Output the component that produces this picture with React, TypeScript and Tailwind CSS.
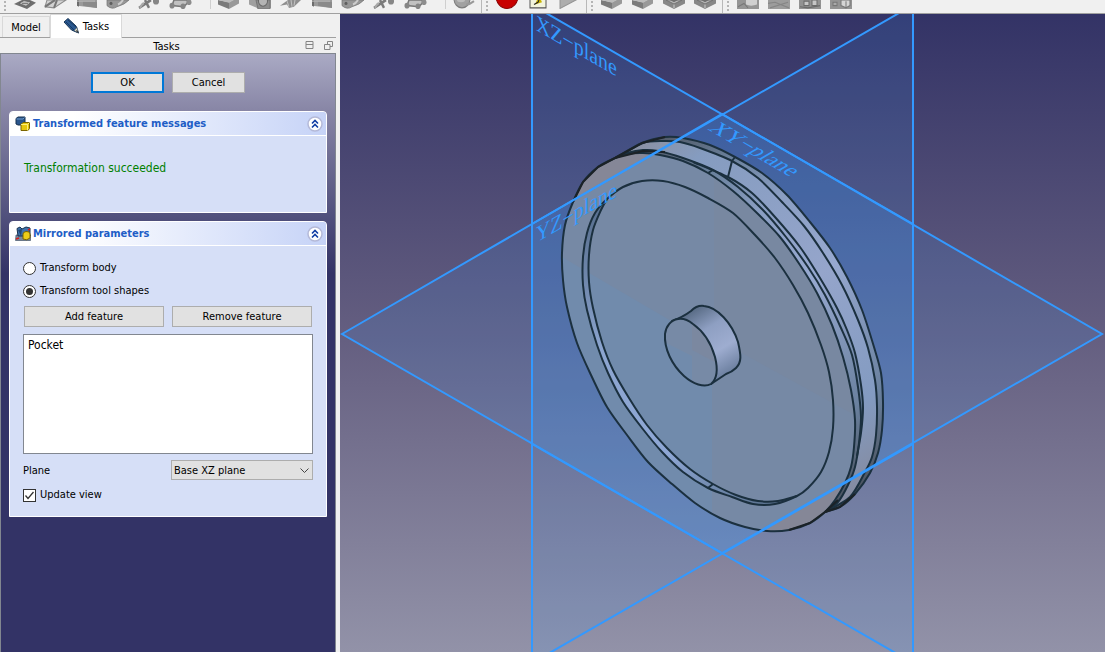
import type { ReactNode } from "react";

type IconName =
  | "sketch"
  | "pad"
  | "block"
  | "sweep"
  | "scissors"
  | "loft"
  | "hole"
  | "bolt"
  | "ball"
  | "record"
  | "macro"
  | "play"
  | "cube"
  | "cubeRing"
  | "tile"
  | "tileLine"
  | "tileDots"
  | "tileCube";

const toolGroups: { id: string; sections: IconName[][] }[] = [
  {
    id: "modeling",
    sections: [
      ["sketch", "pad", "block", "sweep", "scissors", "loft"],
      ["cube", "hole", "bolt", "block", "sweep", "scissors", "loft"],
      ["ball"],
    ],
  },
  { id: "macro", sections: [["record", "macro", "play"]] },
  { id: "dressup", sections: [["cube", "cube", "cubeRing", "cubeRing"]] },
  { id: "transform", sections: [["tile", "tileLine", "tileDots", "tileCube"]] },
];

// Only the lower part of the toolbar is on screen, so the icons are 9px slices
const icons: Record<IconName, ReactNode> = {
  sketch: (
    <>
      <path d="M1 3.500 9 0h8l6 2.500-9 5.500z" fill="#6f6f6f" />
      <path d="M6 3 11 .5l7 1.500-5 3.500z" fill="#c4c4c4" stroke="#555" strokeWidth=".6" />
      <path d="M9 3h6" stroke="#777" />
    </>
  ),
  pad: (
    <>
      <path d="M3 0 1 6l9 1L22 0z" fill="#d2d2d2" stroke="#8c8c8c" />
      <path d="M1 6 11 0M10 7l3-7" stroke="#777" strokeWidth="2" />
    </>
  ),
  block: (
    <>
      <path d="M2 0h20v7L2 5z" fill="#9a9a9a" />
      <path d="M2 0v5l2 1V0z" fill="#6c6c6c" />
      <path d="M8 1h10l4 1v5L8 5z" fill="#8a8a8a" />
      <path d="M2 1h18" stroke="#b8b8b8" />
    </>
  ),
  sweep: (
    <>
      <path d="M1 0v5q5 4 10 1Q19 4 23 0z" fill="#979797" stroke="#777" strokeWidth=".7" />
      <path d="M12 4q3-1 5-4" fill="none" stroke="#ccc" strokeWidth="2" />
      <circle cx="5" cy="3" r="1.500" fill="#5f5f5f" />
    </>
  ),
  scissors: (
    <>
      <path d="M2 7 14 0M8 0l4 7" stroke="#7b7b7b" strokeWidth="2.500" />
      <path d="M3 7q2-4 4-4" fill="none" stroke="#aaa" strokeWidth="2" />
      <circle cx="19" cy="1" r="3" fill="#868686" />
    </>
  ),
  loft: (
    <>
      <path d="M6 0 4 5l12 1 4-4-1-2z" fill="#c1c1c1" stroke="#777" strokeWidth="1.500" />
      <circle cx="4" cy="5" r="2.500" fill="#858585" />
      <circle cx="15" cy="5.500" r="2.500" fill="#858585" />
      <circle cx="21" cy="2" r="2.500" fill="#8d8d8d" />
    </>
  ),
  hole: (
    <>
      <path d="M1 0v4l8 3h14V0z" fill="#a0a0a0" />
      <path d="M8 0h14v8H10z" fill="#8d8d8d" stroke="#767676" />
      <circle cx="15" cy="1" r="4.500" fill="#b4b4b4" stroke="#666" />
    </>
  ),
  bolt: (
    <>
      <path d="M1 5 9 0h13l-7 6-5 1-2-3z" fill="#8f8f8f" />
      <path d="m8 1 2 5M12 0l1 6M16 0l-1 5" stroke="#c2c2c2" />
    </>
  ),
  ball: (
    <>
      <circle cx="10" cy="-1" r="8" fill="#a1a1a1" stroke="#7c7c7c" />
      <path d="M14 4q4 0 8-3" stroke="#999" strokeWidth="2" fill="none" />
      <ellipse cx="9" cy="0" rx="4" ry="2" fill="#bcbcbc" />
    </>
  ),
  record: <circle cx="12" cy="-3.500" r="11" fill="#c80000" stroke="#8c0000" />,
  macro: (
    <>
      <path d="M4-2h16v9H4z" fill="#f2f4dc" stroke="#555" />
      <path d="m9 4 2-4h4l1 2-4 1z" fill="#c8b400" />
      <path d="m8 4 4-2 1-2" stroke="#222" fill="none" />
    </>
  ),
  play: <path d="M3 7.500V-8L20-.5z" fill="#adadad" stroke="#949494" />,
  cube: (
    <>
      <path d="M1 0v4l11 4V2z" fill="#7b7b7b" />
      <path d="M12 2v6l10-5V0h-6z" fill="#999" />
      <path d="M1 0h16l-5 2.500z" fill="#bcbcbc" />
    </>
  ),
  cubeRing: (
    <>
      <path d="M1 0v3l11 5 11-5V0z" fill="#878787" />
      <path d="m4 0 8 3.500L20 0z" fill="#b9b9b9" stroke="#6d6d6d" strokeWidth=".8" />
      <path d="M8 0h8l-4 2z" fill="#707070" />
      <path d="M12 4v3" stroke="#ccc" />
    </>
  ),
  tile: (
    <>
      <path d="M1 0h22v8H1z" fill="#959595" />
      <path d="M10-1h11v5q-6 2-11 0z" fill="#d0d0d0" />
      <path d="m2 6 6-3 4 4" stroke="#777" fill="none" />
    </>
  ),
  tileLine: (
    <>
      <path d="M1 0h22v8H1z" fill="#9c9c9c" />
      <path d="m1 3 7-1 14 5M3 7l18-5" stroke="#858585" fill="none" />
    </>
  ),
  tileDots: (
    <>
      <path d="M1 0h22v8H1z" fill="#929292" />
      <path d="M6 1h5v4H6zM14 0h5v5h-5z" fill="#c6c6c6" stroke="#6b6b6b" />
      <path d="m2 6 8 1 12-2" stroke="#6b6b6b" fill="none" />
    </>
  ),
  tileCube: (
    <>
      <path d="M1 0h22v8H1z" fill="#949494" />
      <path d="M12 0h9v5l-4 2-5-2z" fill="#d5d5d5" stroke="#777" />
      <path d="M17 1v6M4 2h4v3H4z" stroke="#777" fill="#aaa" />
    </>
  ),
};

function Toolbar() {
  return (
    <header className="flex h-[14px] shrink-0 overflow-hidden border-b border-[#a0a0a0] bg-[#f0f0f0]">
      {toolGroups.map((group) => (
        <div
          key={group.id}
          className="flex shrink-0 items-start border-r border-[#b8b8b8] pl-1 pr-[5px] last:border-r-0"
        >
          <span className="mr-[7px] mt-px h-[10px] w-[2px] border-l-2 border-dotted border-[#b4b4b4]" />
          {group.sections.map((section, i) => (
            <div
              key={i}
              className="ml-[6px] flex gap-[7px] border-l border-[#cfcfcf] pl-[6px] pr-[12px] first-of-type:ml-0 first-of-type:border-l-0 first-of-type:pl-0 last:pr-0"
            >
              {section.map((name, j) => (
                <button key={j} type="button" aria-label={name} className="h-[9px] w-6">
                  <svg viewBox="0 0 24 8" preserveAspectRatio="none" className="block h-[9px] w-6">
                    {icons[name]}
                  </svg>
                </button>
              ))}
            </div>
          ))}
        </div>
      ))}
    </header>
  );
}

function TransformIcon() {
  return (
    <svg viewBox="0 0 16 16" className="size-4 shrink-0">
      <path d="M1 2.500 3 1h7v6L8.500 9H3L1 8z" fill="#2b568c" stroke="#17304f" />
      <path d="M1.500 3H8l1.500-1.500" stroke="#6b98c9" fill="none" />
      <path d="M6 8.500 8 6.500h6.500v6L13 14.500H6z" fill="#e7c80d" stroke="#7b6500" />
      <path d="M6 8.500h6.500l2-2M12.500 8.500v6" stroke="#fff07a" fill="none" />
    </svg>
  );
}

function MirrorIcon() {
  return (
    <svg viewBox="0 0 16 16" className="size-4 shrink-0">
      <path d="M1 9h14.500v5.500H.5z" fill="#78899d" stroke="#46566b" strokeWidth=".7" />
      <path d="M2 2.500 5 1l2 2 4-2 4 1v8H3z" fill="#3f73ac" stroke="#16304f" />
      <path d="m3 4 3 6 1-7" fill="#204774" />
      <path d="M8 8q0-2 3-2.500Q15 5 15 8v4q-3 3-7 1z" fill="#edce18" stroke="#7b6500" />
      <path d="m1 13 3-1M13 4l2-1" stroke="#d61f1f" strokeWidth="1.500" />
    </svg>
  );
}

function CollapseButton() {
  return (
    <button type="button" aria-label="Collapse" className="size-4 shrink-0">
      <svg viewBox="0 0 16 16" className="block size-4">
        <circle cx="8" cy="8" r="7" fill="#fff" stroke="#b4b9d8" strokeWidth="1.500" />
        <path d="m5 7.500 3-3 3 3M5 11.500l3-3 3 3" fill="none" stroke="#123ea5" strokeWidth="1.600" />
      </svg>
    </button>
  );
}

function TaskBox({ title, icon, children }: { title: string; icon: ReactNode; children: ReactNode }) {
  return (
    <section className="overflow-hidden rounded-t border border-white bg-[#d6dff7]">
      <header className="flex h-6 items-center gap-[2px] border-b border-white bg-gradient-to-r from-white from-20% to-[#c6d3f7] pl-[5px] pr-[3px]">
        {icon}
        <h2 className="flex-1 text-[11px] font-bold leading-4 text-[#215dc6]">{title}</h2>
        <CollapseButton />
      </header>
      {children}
    </section>
  );
}

const buttonStyle = "h-[21px] border border-[#adadad] bg-[#e1e1e1] pt-px text-center leading-4";

function Radio({ label, checked }: { label: string; checked?: boolean }) {
  return (
    <label className="flex items-center gap-1">
      <input
        type="radio"
        name="mode"
        defaultChecked={checked}
        className="grid size-[13px] appearance-none place-content-center rounded-full border border-[#333] bg-white before:size-[7px] before:rounded-full checked:before:bg-[#333]"
      />
      {label}
    </label>
  );
}

function TaskPanel() {
  return (
    <aside className="mr-1 flex w-[336px] shrink-0 flex-col">
      <nav className="flex h-6 items-end border-b border-[#a0a0a0] pl-[2px]">
        <button
          type="button"
          className="h-[21px] w-12 border border-b-0 border-[#d9d9d9] pt-[2px] leading-4"
        >
          Model
        </button>
        <button
          type="button"
          className="-mb-px flex h-6 w-[72px] items-center justify-center gap-1 border border-b-0 border-[#d9d9d9] bg-white pb-px"
        >
          <svg viewBox="0 0 16 16" className="size-4">
            <path d="M1 4 5 .5 13 8l2.500 7L8.500 12z" fill="#2a588f" stroke="#183657" />
            <path d="m3 4 8 8M5 2l8 7" stroke="#173a66" />
            <path d="m11 12.500 3-3 1.500 5.500z" fill="#e8e1c8" stroke="#183657" strokeWidth=".5" />
            <path d="m13 13 1-1 1.500 3z" fill="#111" />
          </svg>
          <span className="pt-[3px]">Tasks</span>
        </button>
      </nav>
      <div className="flex h-[15px] shrink-0 items-center pr-[3px]">
        <h1 className="flex-1 pl-7 pt-px text-center leading-[15px]">Tasks</h1>
        <div className="flex gap-[10px]">
          <button type="button" aria-label="Minimize">
            <svg viewBox="0 0 9 9" className="block size-[9px]" fill="none" stroke="#858585">
              <path d="M1 .5h7v7H1zM1 3.500h7" />
            </svg>
          </button>
          <button type="button" aria-label="Float">
            <svg viewBox="0 0 9 9" className="block size-[9px]" fill="none" stroke="#858585">
              <path d="M3.500 3V.5h5v5H6M.5 3.500H6v5H.5z" />
            </svg>
          </button>
        </div>
      </div>

      <div className="flex flex-1 flex-col gap-2 border border-b-0 border-[#828790] bg-[linear-gradient(#aaaac4_0px,#8886a6_56px,#333366_220px)] px-2 pt-[18px]">
        <div className="mb-[10px] flex justify-center gap-2">
          <button type="button" className="h-[21px] w-[73px] border-2 border-[#0078d7] bg-[#e1e1e1] pt-px leading-4">
            OK
          </button>
          <button type="button" className={`${buttonStyle} w-[73px]`}>
            Cancel
          </button>
        </div>

        <TaskBox title="Transformed feature messages" icon={<TransformIcon />}>
          <p className="px-[14px] pb-9 pt-6 text-[12px] leading-4 text-[#008000]">
            Transformation succeeded
          </p>
        </TaskBox>

        <TaskBox title="Mirrored parameters" icon={<MirrorIcon />}>
          <form className="flex flex-col px-[13px] pb-[13px] pt-[14px] leading-4">
            <Radio label="Transform body" />
            <div className="h-[7px]" />
            <Radio label="Transform tool shapes" checked />
            <div className="mt-[7px] grid grid-cols-2 gap-2 px-px">
              <button type="button" className={buttonStyle}>
                Add feature
              </button>
              <button type="button" className={buttonStyle}>
                Remove feature
              </button>
            </div>
            <ul className="mt-[7px] h-[120px] border border-[#828790] bg-white px-1 py-[2px] text-[12px]">
              <li>Pocket</li>
            </ul>
            <div className="mt-[6px] flex items-center justify-between">
              <label htmlFor="plane" className="pt-px">
                Plane
              </label>
              <div className="grid w-[142px]">
                <select
                  id="plane"
                  className="col-start-1 row-start-1 h-5 appearance-none border border-[#adadad] bg-[#e1e1e1] px-[2px] pt-px leading-4"
                >
                  <option>Base XZ plane</option>
                </select>
                <svg
                  viewBox="0 0 9 5"
                  className="pointer-events-none col-start-1 row-start-1 mr-1 h-[5px] w-[9px] self-center justify-self-end"
                >
                  <path d="m.5.5 4 4 4-4" fill="none" stroke="#444" />
                </svg>
              </div>
            </div>
            <label className="mt-[7px] flex items-center gap-1">
              <span className="grid size-[13px]">
                <input
                  type="checkbox"
                  defaultChecked
                  className="col-start-1 row-start-1 size-[13px] appearance-none border border-[#333] bg-white"
                />
                <svg viewBox="0 0 13 13" className="pointer-events-none col-start-1 row-start-1 size-[13px]">
                  <path d="m2.500 6.500 2.500 3 5.500-6.500" fill="none" stroke="#333" strokeWidth="1.300" />
                </svg>
              </span>
              Update view
            </label>
          </form>
        </TaskBox>
      </div>
    </aside>
  );
}

// Outlines of the wheel as x y pairs, front to back
const frontRim =
  "643 153 627 154 615 158 598 167 583 182 573 202 565 225 562 253 563 280 567 307 577 343 591 375 607 407 627 435 648 462 672 484 695 503 720 518 745 527 767 531 789 530 810 523 825 512 835 500 845 483 851 467 854 447 855 420 851 390 843 357 832 325 817 293 800 265 780 237 757 213 733 191 708 173 683 161 660 155";
const grooveRim =
  "615 158 627 153 643 150 658 151 683 158 713 170 738 187 763 210 786 237 808 267 825 295 841 328 852 355 858 387 861 417 859 443 855 467 848 485 838 502 825 512";
const grooveEdge =
  "693 162 728 177 752 193 775 217 800 247 820 278 837 308 847 330 855 353 861 385 863 408 861 433 857 456";
const backEdge =
  "620 156 643 143 663 141 680 142 700 148 732 161 758 178 782 202 804 226 823 253 842 285 858 320 868 348 875 380 877 407 876 435 872 457 865 472 850 497 825 512";
const backRim =
  "615 158 642 143 665 137 683 138 710 145 735 157 762 173 787 195 810 222 830 248 847 277 862 310 874 347 881 373 883 402 882 430 878 453 870 473 855 494 840 507 825 512";
const pocketRim =
  "583 257 587 233 595 213 607 199 623 187 642 181 663 181 685 187 708 198 733 213 755 235 775 258 793 285 808 313 821 345 829 372 833 400 833 428 829 452 821 472 808 488 797 496 775 504 753 504 732 497 708 488 683 472 662 452 642 428 623 402 608 373 597 345 587 310 583 285";
const pocketFloor =
  "607 199 601 210 593 230 589 255 589 282 593 308 602 342 613 370 629 398 647 425 667 448 690 469 713 484 736 495 758 501 778 501 797 496";
const hubFace =
  "M678 319C683 318 688 320 693 324 703 331 711 343 715 357 718 369 717 379 711 384 704 388 693 384 684 376 672 365 664 349 665 334 666 326 671 320 678 319Z";
const hubSide =
  "M672 321Q683 317 691 311 697 305 704 306C717 307 732 323 738 342 741 355 742 362 736 368Q732 372 726 374L711 384Z";

// Runs a smooth curve through the points
function curve(list: string, closed = false) {
  const n = list.split(" ").map(Number);
  const pts: number[][] = [];
  for (let i = 0; i < n.length; i += 2) pts.push([n[i], n[i + 1]]);
  const count = pts.length;
  const at = (i: number) =>
    closed ? pts[(i + count) % count] : pts[Math.max(0, Math.min(count - 1, i))];
  let d = `M${pts[0][0]} ${pts[0][1]}`;
  for (let i = 0; i < (closed ? count : count - 1); i++) {
    const [a, b, c, e] = [at(i - 1), at(i), at(i + 1), at(i + 2)];
    d += `C${b[0] + (c[0] - a[0]) / 7} ${b[1] + (c[1] - a[1]) / 7} ${c[0] - (e[0] - b[0]) / 7} ${c[1] - (e[1] - b[1]) / 7} ${c[0]} ${c[1]}`;
  }
  return closed ? d + "Z" : d;
}

function Wheel() {
  return (
    <g strokeLinejoin="round">
      <path d={curve(backRim) + "Z"} fill="url(#chamfer)" />
      <path d={curve(backEdge) + "Z"} fill="url(#side)" />
      <path d={curve(grooveEdge) + "L825 512 643 153Z"} fill="url(#chamfer)" />
      <path d={curve(grooveRim) + "Z"} fill="url(#chamfer)" />
      <g clipPath="url(#front)">
        <path d="M555 140h310v400H555z" fill="#7689a5" />
        <path d="M555 253 712 345V540H555z" fill="#718bac" />
        <path d="M714 140h150v280L714 338z" fill="#7888a1" />
        <path d="M555 140h123L555 211zM912 444 723 553H912z" fill="#858797" />
      </g>
      <path
        d={
          curve(pocketFloor) +
          "L775 504 753 504 732 497 708 488 683 472 662 452 642 428 623 402 608 373 597 345 587 310 583 285 583 257 587 233 595 213Z"
        }
        fill="url(#wall)"
      />
      <g fill="none" stroke="#1b303f" strokeWidth="2">
        <path d={curve(backRim)} />
        <path d={curve(backEdge)} />
        <path d={curve(grooveEdge)} />
        <path d={curve(grooveRim)} />
        <path d={curve(frontRim, true)} />
        <path d={curve(pocketRim, true)} />
        <path d={curve(pocketFloor)} />
        <path d="M735 157 732 161 728 177M713 170 708 173M713 484 708 488" />
      </g>
      <path d={hubSide} fill="url(#hub)" stroke="#1b303f" strokeWidth="2" />
      <path d={hubFace} fill="#778aa6" />
      <g clipPath="url(#hubClip)">
        <path d="M660 340 692 356V395H660z" fill="#718bac" />
        <path d="M692 310h30v56l-30-16z" fill="#7b88a0" />
      </g>
      <path d={hubFace} fill="none" stroke="#1b303f" strokeWidth="2" />
      <path
        d="M573 202 583 182 598 167 615 158 642 143 665 137M615 158 643 151 665 152M789 530 810 523 825 512 840 507 855 494M825 512 838 500"
        fill="none"
        stroke="#1b2227"
        strokeWidth="2"
      />
    </g>
  );
}

function Viewport() {
  return (
    <main className="min-w-0 flex-1 overflow-hidden bg-[linear-gradient(#333366,#645e80_50%,#9292a8)]">
      <svg viewBox="340 14 765 638" preserveAspectRatio="xMidYMid slice" className="block h-full w-full">
        <defs>
          <linearGradient id="side" x1="630" y1="140" x2="870" y2="500" gradientUnits="userSpaceOnUse">
            <stop offset="0" stopColor="#8b8f9f" />
            <stop offset=".12" stopColor="#859cc0" />
            <stop offset=".5" stopColor="#95a5cb" />
            <stop offset=".8" stopColor="#839bc1" />
            <stop offset="1" stopColor="#85889a" />
          </linearGradient>
          <linearGradient id="chamfer" x1="630" y1="140" x2="870" y2="500" gradientUnits="userSpaceOnUse">
            <stop offset="0" stopColor="#4a4f59" />
            <stop offset=".17" stopColor="#6b829e" />
            <stop offset=".3" stopColor="#8a9ec2" />
            <stop offset=".5" stopColor="#97a9d0" />
            <stop offset=".8" stopColor="#6a819f" />
            <stop offset="1" stopColor="#464b54" />
          </linearGradient>
          <linearGradient id="wall" x1="600" y1="200" x2="750" y2="510" gradientUnits="userSpaceOnUse">
            <stop offset="0" stopColor="#566d8c" />
            <stop offset=".4" stopColor="#8ca5d0" />
            <stop offset=".75" stopColor="#8ea7d5" />
            <stop offset="1" stopColor="#5d7592" />
          </linearGradient>
          <linearGradient id="hub" x1="690" y1="310" x2="733" y2="380" gradientUnits="userSpaceOnUse">
            <stop offset="0" stopColor="#566982" />
            <stop offset=".3" stopColor="#8e9fc2" />
            <stop offset=".6" stopColor="#9eadd0" />
            <stop offset="1" stopColor="#5c7190" />
          </linearGradient>
          <clipPath id="front">
            <path d={curve(frontRim, true)} />
          </clipPath>
          <clipPath id="hubClip">
            <path d={hubFace} />
          </clipPath>
        </defs>

        <g fill="#3399ff" fillOpacity=".13">
          <path d="M342 334 722 114 1102 334 722 553z" />
          <path d="M532 5 913 224V663L532 444z" />
          <path d="M532 224 913 5V444L532 663z" />
        </g>

        <Wheel />

        <g fill="none" stroke="#3399ff" strokeWidth="2">
          <path d="M342 334 722 114 1102 334 722 553z" />
          <path d="M532 5 913 224V663L532 444z" />
          <path d="M532 224 913 5V444L532 663z" />
        </g>

        <g fill="#3399ff" fontSize="23" fontFamily="'Liberation Serif', serif">
          <text transform="matrix(.866 .5 0 1 536 30)">XZ−plane</text>
          <text transform="matrix(.866 .5 -.866 .5 707 129)">XY−plane</text>
          <text transform="matrix(.866 -.5 0 1 536 243)">YZ−plane</text>
        </g>
      </svg>
    </main>
  );
}

export default function App() {
  return (
    <div className="flex h-screen flex-col bg-[#f0f0f0] font-['DejaVu_Sans_Condensed','Noto_Sans',sans-serif] text-[11px] text-black">
      <Toolbar />
      <div className="flex min-h-0 flex-1">
        <TaskPanel />
        <Viewport />
      </div>
    </div>
  );
}
